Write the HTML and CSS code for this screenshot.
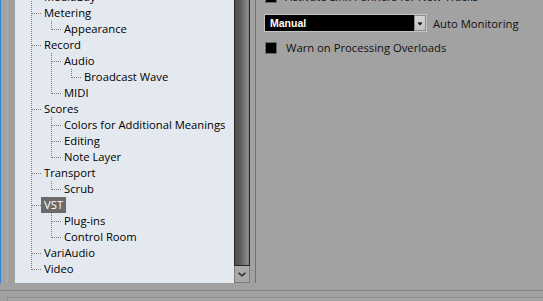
FILE: index.html
```html
<!DOCTYPE html>
<html>
<head>
<meta charset="utf-8">
<link rel="stylesheet" href="styles.css">
</head>
<body>
<div class="window">
  <div class="main">
    <div class="gutter"></div>
    <div class="tree-pane">
      <div class="tree">
        <ul class="root">
          <li><div class="row"><span class="label">MediaBay</span></div></li>
          <li><div class="row"><span class="label">Metering</span></div>
            <ul>
              <li><div class="row"><span class="label">Appearance</span></div></li>
            </ul>
          </li>
          <li><div class="row"><span class="label">Record</span></div>
            <ul>
              <li><div class="row"><span class="label">Audio</span></div>
                <ul>
                  <li><div class="row"><span class="label">Broadcast Wave</span></div></li>
                </ul>
              </li>
              <li><div class="row"><span class="label">MIDI</span></div></li>
            </ul>
          </li>
          <li><div class="row"><span class="label">Scores</span></div>
            <ul>
              <li><div class="row"><span class="label">Colors for Additional Meanings</span></div></li>
              <li><div class="row"><span class="label">Editing</span></div></li>
              <li><div class="row"><span class="label">Note Layer</span></div></li>
            </ul>
          </li>
          <li><div class="row"><span class="label">Transport</span></div>
            <ul>
              <li><div class="row"><span class="label">Scrub</span></div></li>
            </ul>
          </li>
          <li><div class="row selected"><span class="label">VST</span></div>
            <ul>
              <li><div class="row"><span class="label">Plug-ins</span></div></li>
              <li><div class="row"><span class="label">Control Room</span></div></li>
            </ul>
          </li>
          <li><div class="row"><span class="label">VariAudio</span></div></li>
          <li><div class="row"><span class="label">Video</span></div></li>
        </ul>
      </div>
      <div class="scrollbar">
        <div class="thumb"></div>
        <div class="btn-down">
          <svg width="16" height="16" viewBox="0 0 16 16"><path d="M4 6.5 L8 10 L12 6.5" fill="none" stroke="#2a2a2a" stroke-width="1.6"/></svg>
        </div>
      </div>
    </div>
    <div class="sep"></div>
    <div class="settings">
      <div class="opt opt-first">
        <span class="check"></span>
        <span class="opt-text">Activate Link Panners for New Tracks</span>
      </div>
      <div class="combo-row">
        <div class="combo">
          <span class="combo-value">Manual</span>
          <span class="combo-btn">
            <svg width="10" height="15" viewBox="0 0 10 15"><path d="M2.5 6.5 H7.5 L5 9.5 Z" fill="#000"/></svg>
          </span>
        </div>
        <span class="combo-label">Auto Monitoring</span>
      </div>
      <div class="opt opt-warn">
        <span class="check"></span>
        <span class="opt-text">Warn on Processing Overloads</span>
      </div>
    </div>
  </div>
  <div class="footer">
    <div class="footer-rule"></div>
    <div class="footer-box"></div>
  </div>
</div>
</body>
</html>
```
FILE: styles.css
```css
* { box-sizing: border-box; }
html, body { margin: 0; padding: 0; }
body {
  width: 543px;
  height: 301px;
  overflow: hidden;
  background: #a1a1a1;
  font-family: "Open Sans", "Noto Sans", sans-serif;
  font-size: 11.25px;
}
.window { display: flex; flex-direction: column; height: 301px; }
.main { display: flex; height: 283px; }

.gutter {
  width: 15px;
  border-left: 1px solid #2f86d8;
  background: linear-gradient(to right, #a3a3a3 0 6px, #adadad 6px 7px, #9e9e9e 7px);
}

.tree-pane { display: flex; width: 235px; background: #e4e9ef; }
.tree { width: 219px; overflow: hidden; }
.tree ul { list-style: none; margin: 0; padding: 0 0 0 20px; }
.tree ul.root { padding-left: 16px; margin-top: -11px; }
.tree li {
  background: repeating-linear-gradient(to bottom, #7a7a7a 0 1px, transparent 1px 2px) 0 0 / 1px 100% no-repeat;
}
.tree li:last-child { background-size: 1px 9px; }
.row {
  display: flex;
  height: 16px;
  line-height: 16px;
  padding-left: 10px;
  background: repeating-linear-gradient(to right, #7a7a7a 0 1px, transparent 1px 2px) 1px 8px / 10px 1px no-repeat;
}
.label { padding: 0 3px; color: #000; white-space: nowrap; }
.row.selected .label { background: #6b6b6b; color: #fff; }

.scrollbar { width: 16px; display: flex; flex-direction: column; }
.thumb {
  flex: 1;
  border: 1px solid #262626;
  border-top: none;
  background: linear-gradient(to right, #4f4f4f, #5a5a5a 35%, #8c8c8c 90%, #7a7a7a);
}
.btn-down {
  height: 17px;
  background: #a9a9a9;
  border: 1px solid #7c7c7c;
  border-top: none;
  display: flex;
  align-items: center;
  justify-content: center;
}
.btn-down svg { display: block; }

.sep { width: 5px; }

.settings {
  flex: 1;
  border-left: 1px solid #707070;
  padding-left: 8px;
  color: #111;
  background: #a2a2a2;
}
.opt { display: flex; align-items: center; height: 12px; }
.opt-first { margin-top: -9px; }
.opt-warn { margin-top: 10px; }
.check {
  width: 12px;
  height: 12px;
  margin-left: 1px;
  background: #000;
  border: 1px solid #6a6a6a;
  flex: none;
}
.opt-text { margin-left: 8px; white-space: nowrap; line-height: 16px; }
.opt-warn .opt-text { margin-left: 9px; }

.combo-row { display: flex; align-items: center; margin-top: 11px; height: 18px; }
.combo {
  display: flex;
  width: 163px;
  height: 18px;
  border: 1px solid #c4c4c4;
  background: #000;
}
.combo-value {
  flex: 1;
  padding-left: 5px;
  color: #fff;
  font-family: "Liberation Sans", Arial, sans-serif;
  font-weight: bold;
  font-size: 10.5px;
  line-height: 16px;
}
.combo-btn {
  width: 12px;
  background: linear-gradient(#d4d4d4, #c2c2c2);
  border: 1px solid #8a8a8a;
  display: flex;
  align-items: center;
  justify-content: center;
}
.combo-label { margin-left: 6px; white-space: nowrap; }

.footer { height: 18px; padding-top: 7px; }
.footer-rule { height: 7px; border-top: 1px solid #858585; }
.footer-box {
  height: 4px;
  margin-left: 7px;
  border-top: 1px solid #8c8c8c;
  border-left: 1px solid #8c8c8c;
  background: #a5a5a5;
}
```
